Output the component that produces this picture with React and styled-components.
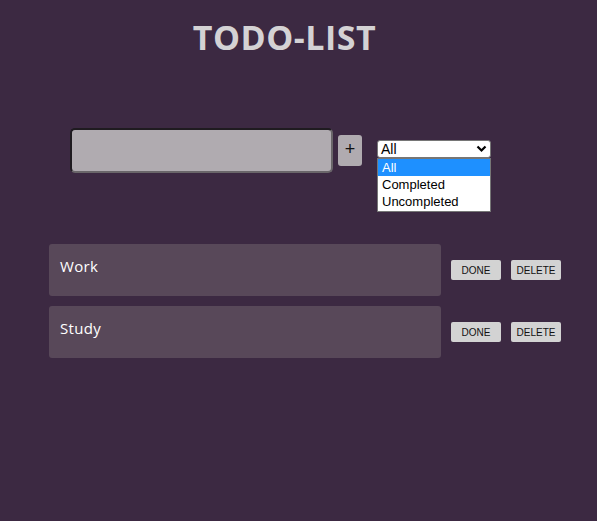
import React, { useState } from 'react';
import styled, { createGlobalStyle } from 'styled-components';

const GlobalStyle = createGlobalStyle`
  html, body {
    margin: 0;
    padding: 0;
    background: #3c2942;
    min-height: 100%;
  }
  body {
    font-family: 'Open Sans', 'Liberation Sans', sans-serif;
  }
`;

const Page = styled.div`
  width: 597px;
  height: 521px;
  background: #3c2942;
  overflow: hidden;
`;

const Title = styled.h1`
  margin: 0;
  padding-top: 14px;
  height: 52px;
  text-align: center;
  padding-right: 28px;
  font-size: 34px;
  font-weight: 700;
  letter-spacing: 0.5px;
  color: #d4d2d4;
`;

const Form = styled.form`
  display: flex;
  align-items: center;
  margin-top: 62px;
  padding-left: 70px;
`;

const TextInput = styled.input`
  box-sizing: border-box;
  width: 263px;
  height: 45px;
  background: #b0abb0;
  border: 2px solid #6a666a;
  border-top-color: #1f1b20;
  border-left-color: #1f1b20;
  border-radius: 5px;
  outline: none;
`;

const AddButton = styled.button`
  box-sizing: border-box;
  width: 24px;
  height: 31px;
  margin-left: 5px;
  border: none;
  border-radius: 3px;
  background: #b0abb0;
  color: #111;
  font-size: 18px;
  font-family: 'Liberation Sans', Arial, sans-serif;
  padding: 0 0 2px;
`;

const SelectWrap = styled.div`
  position: relative;
  margin-left: 15px;
  margin-top: -3px;
`;

const FakeSelect = styled.div`
  box-sizing: border-box;
  width: 114px;
  height: 18px;
  background: #fff;
  border: 1px solid #767676;
  border-radius: 3px;
  display: flex;
  align-items: center;
  justify-content: space-between;
  padding: 0 3px 0 3px;
  font-family: 'Liberation Sans', Arial, sans-serif;
  font-size: 14px;
  color: #000;
`;

const Menu = styled.ul`
  position: absolute;
  top: 18px;
  left: 0;
  box-sizing: border-box;
  width: 114px;
  margin: 0;
  padding: 0 0 1px;
  list-style: none;
  background: #fff;
  border: 1px solid #767676;
  font-family: 'Liberation Sans', Arial, sans-serif;
  font-size: 13px;
  color: #000;
`;

const Option = styled.li`
  height: 17px;
  line-height: 17px;
  padding-left: 4px;
  background: ${({ $active }) => ($active ? '#1e90ff' : '#fff')};
  color: ${({ $active }) => ($active ? '#fff' : '#000')};
`;

const List = styled.ul`
  margin: 71px 0 0;
  padding: 0 0 0 49px;
  list-style: none;
  display: flex;
  flex-direction: column;
  gap: 10px;
`;

const Row = styled.li`
  display: flex;
  align-items: center;
`;

const Item = styled.div`
  box-sizing: border-box;
  width: 392px;
  height: 52px;
  background: #584859;
  border-radius: 3px;
  padding: 12px 11px 0;
  color: #fff;
  font-size: 15px;
  letter-spacing: 0.3px;
`;

const SmallButton = styled.button`
  box-sizing: border-box;
  width: 50px;
  height: 20px;
  margin-left: 10px;
  border: none;
  border-radius: 2px;
  background: #d3d3d3;
  color: #111;
  font-family: 'Liberation Sans', Arial, sans-serif;
  font-size: 10px;
  padding: 0;
`;

const Chevron = () => (
  <svg width="11" height="8" viewBox="0 0 11 8">
    <path d="M1.5 1.5 L5.5 5.5 L9.5 1.5" fill="none" stroke="#000" strokeWidth="2.2" />
  </svg>
);

export default function App() {
  const [todos] = useState(['Work', 'Study']);
  const options = ['All', 'Completed', 'Uncompleted'];

  return (
    <Page>
      <GlobalStyle />
      <Title>TODO-LIST</Title>
      <Form onSubmit={e => e.preventDefault()}>
        <TextInput type="text" />
        <AddButton type="submit">+</AddButton>
        <SelectWrap>
          <FakeSelect>
            <span>All</span>
            <Chevron />
          </FakeSelect>
          <Menu>
            {options.map((o, i) => (
              <Option key={o} $active={i === 0}>
                {o}
              </Option>
            ))}
          </Menu>
        </SelectWrap>
      </Form>
      <List>
        {todos.map(t => (
          <Row key={t}>
            <Item>{t}</Item>
            <SmallButton>DONE</SmallButton>
            <SmallButton>DELETE</SmallButton>
          </Row>
        ))}
      </List>
    </Page>
  );
}
